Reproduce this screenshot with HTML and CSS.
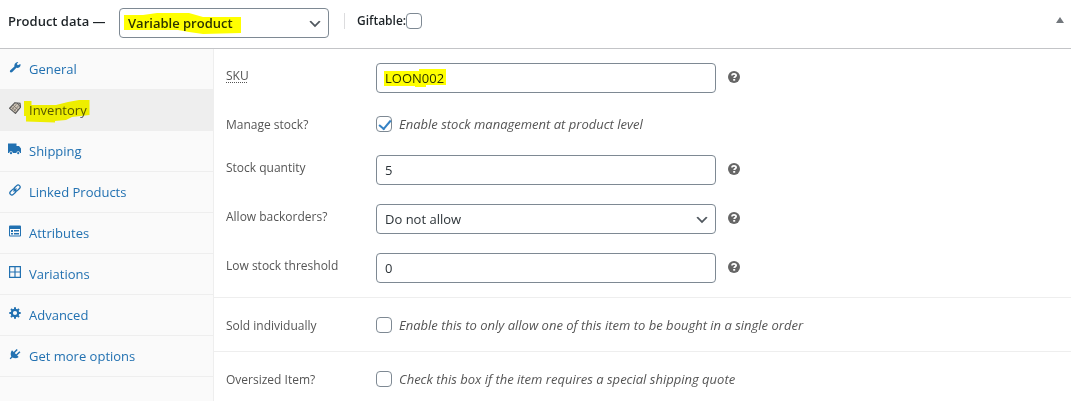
FILE: index.html
```html
<!DOCTYPE html>
<html lang="en">
<head>
<meta charset="utf-8">
<title>Product data</title>
<link rel="stylesheet" href="styles.css">
</head>
<body>
<svg class="sprite" aria-hidden="true">
  <symbol id="chevron" viewBox="0 0 20 20"><path d="M5 6l5 5 5-5 2 1-7 7-7-7z" fill="#50575e"/></symbol>
  <symbol id="help" viewBox="0 0 12 12"><circle cx="6" cy="6" r="6" fill="#666"/><path d="M4 4.600C4 3.300 4.800 2.800 6 2.800s2.100.6 2.100 1.600c0 1.300-1.900 1.300-1.900 2.700" fill="none" stroke="#fff" stroke-width="1.800"/><rect x="5.200" y="8" width="2" height="1.700" fill="#fff"/></symbol>
</svg>
<section class="postbox">
  <header class="postbox-header">
    <label class="title" for="product-type">Product data —</label>
    <span class="select-wrap type-select">
      <select id="product-type" class="control strong"><option>Variable product</option></select>
      <svg class="chevron"><use href="#chevron"/></svg>
      <svg class="mark mark-type" viewBox="0 0 120 22"><path d="M1 2L20 2 34 0 66 0 80 4 104 4 118 4 118 20 80 21 66 19 55 17 1 17z"/></svg>
    </span>
    <label class="giftable">Giftable:<input type="checkbox" class="check"></label>
    <button class="toggle" type="button" aria-label="Toggle panel"><svg viewBox="0 0 8 6"><path d="M4 0l4 6H0z" fill="#72777c"/></svg></button>
  </header>
  <div class="columns">
    <nav class="tabs">
      <a href="#general"><svg viewBox="0 0 12 12"><path d="M1.500 11.300c-.8-.5-.8-1.500-.2-2.100L5.400 5.600C5 3.500 6 1.400 8.500.9L9.300 1 7.800 2.900 8.900 4.200 11.300 3l.3.9c-.2 2.200-2.200 3.300-4.200 2.900L3.300 11c-.5.500-1.200.6-1.800.3z"/></svg>General</a>
      <a href="#inventory" class="active"><svg viewBox="0 0 12 12"><path d="M6 .7L11 1.300l.6 3.900L6.500 11.400.5 6.300z" fill="#cfc6b8" stroke="#555" stroke-width="1.100"/><path d="M2.300 5l5.200 4.700M4 3.200l5 4.500M2.500 8L7.500 2.200M4.500 9.700L9.500 3.800" stroke="#77706a" stroke-width=".8" fill="none"/><path d="M8 1l3.500 4" stroke="#555"/></svg><span class="marked">Inventory<svg class="mark mark-tab" viewBox="0 0 66 24"><path d="M0 2H7.500V6L32 6 44 3 55 1H65.500V16L48 18 42 21 31 22 31 23.500 2 22.500V17H0z"/></svg></span></a>
      <a href="#shipping"><svg class="truck" viewBox="0 0 13 12"><path d="M0 .5h8.500V3h2.500l2 2.500V10H0z"/><circle cx="3" cy="10" r="1.800" fill="#fafafa"/><circle cx="10.200" cy="10" r="1.800" fill="#fafafa"/><circle cx="3" cy="10.200" r="1.100"/><circle cx="10.200" cy="10.200" r="1.100"/></svg>Shipping</a>
      <a href="#linked"><svg viewBox="0 0 12 12"><g fill="none" stroke="#2271b1" stroke-width="1.300"><rect x="4.700" y="2" width="6.800" height="4" rx="2" transform="rotate(-45 8.100 4)"/><rect x=".5" y="6" width="6.800" height="4" rx="2" transform="rotate(-45 3.900 8)"/><path d="M4.500 7.500l3-3"/></g></svg>Linked Products</a>
      <a href="#attributes"><svg viewBox="0 0 12 12"><path fill-rule="evenodd" d="M1 .5h10q1 0 1 1v9q0 1-1 1H1q-1 0-1-1v-9q0-1 1-1zM1 4v6.500h10V4z"/><path d="M2 5h2v2H2zM2 8h2v1.500H2zM5 5h5v1.500H5zM5 8h5v1.500H5z"/></svg>Attributes</a>
      <a href="#variations"><svg viewBox="0 0 12 12"><path d="M.6.600h10.800v10.800H.6zM6 .6v10.800M.6 6h10.800" fill="none" stroke="#2271b1" stroke-width="1.200"/></svg>Variations</a>
      <a href="#advanced"><svg viewBox="0 0 12 12"><circle cx="6" cy="6" r="3.200" fill="none" stroke="#2271b1" stroke-width="2.200"/><path d="M6 .3v2M6 9.700v2M.3 6h2M9.700 6h2M2 2l1.400 1.400M8.600 8.600L10 10M2 10l1.400-1.400M8.600 3.400L10 2" stroke="#2271b1" stroke-width="2"/></svg>Advanced</a>
      <a href="#more"><svg viewBox="0 0 12 12"><path d="M3 2.300L9.700 9C8 10.500 5.500 10.700 3.500 9.500L1.500 11.300.7 10.500 2.300 8.500C1.300 6.500 1.500 4 3 2.300z"/><path d="M5 4.800L8.200 1.500M7.300 7.200L10.900 3.700" stroke="#2271b1" stroke-width="1.500"/></svg>Get more options</a>
    </nav>
    <form class="panel">
      <div class="group">
        <div class="row">
          <label for="sku"><abbr title="Stock Keeping Unit">SKU</abbr></label>
          <span class="field"><input id="sku" class="control" type="text" value="LOON002"><svg class="mark mark-sku" viewBox="0 0 63 18"><path d="M0 2H35V0H62V16H42V18H31V17H0z"/></svg></span>
          <svg class="help"><use href="#help"/></svg>
        </div>
        <div class="row row-check">
          <label for="manage">Manage stock?</label>
          <input id="manage" type="checkbox" class="check" checked>
          <span class="description">Enable stock management at product level</span>
        </div>
        <div class="row">
          <label for="qty">Stock quantity</label>
          <span class="field"><input id="qty" class="control" type="text" value="5"></span>
          <svg class="help"><use href="#help"/></svg>
        </div>
        <div class="row">
          <label for="backorders">Allow backorders?</label>
          <span class="field select-wrap"><select id="backorders" class="control"><option>Do not allow</option></select><svg class="chevron"><use href="#chevron"/></svg></span>
          <svg class="help"><use href="#help"/></svg>
        </div>
        <div class="row">
          <label for="threshold">Low stock threshold</label>
          <span class="field"><input id="threshold" class="control" type="text" value="0"></span>
          <svg class="help"><use href="#help"/></svg>
        </div>
      </div>
      <div class="group group-single">
        <div class="row row-check">
          <label for="sold">Sold individually</label>
          <input id="sold" type="checkbox" class="check">
          <span class="description">Enable this to only allow one of this item to be bought in a single order</span>
        </div>
      </div>
      <div class="group group-single">
        <div class="row row-check">
          <label for="oversized">Oversized Item?</label>
          <input id="oversized" type="checkbox" class="check">
          <span class="description">Check this box if the item requires a special shipping quote</span>
        </div>
      </div>
    </form>
  </div>
</section>
</body>
</html>
```
FILE: styles.css
```css
* { box-sizing: border-box; }

html, body { height: 100%; }

body {
  margin: 0;
  overflow: hidden;
  background: #fff;
  color: #3c434a;
  font: 13px/20px "Open Sans", "Noto Sans", sans-serif;
}

.sprite { display: none; }

.postbox {
  display: flex;
  flex-direction: column;
  min-height: 100%;
}

.postbox-header {
  display: flex;
  align-items: flex-start;
  padding: 8px 7px 10px 8px;
  border-bottom: 1px solid #c3c4c7;
  color: #1d2327;
}

.title {
  width: 111px;
  padding-top: 3px;
  font-weight: 600;
  white-space: nowrap;
}

.select-wrap { position: relative; }

.type-select { width: 210px; }

.control {
  display: block;
  width: 100%;
  height: 30px;
  margin: 0;
  padding: 0 8px;
  appearance: none;
  border: 1px solid #7e8993;
  border-radius: 4px;
  background: #fff;
  color: #2c3338;
  font: 13px/28px "Open Sans", "Noto Sans", sans-serif;
}

.strong { font-weight: 600; }

.chevron {
  position: absolute;
  top: 8px;
  right: 6px;
  width: 16px;
  height: 16px;
  pointer-events: none;
}

.mark {
  position: absolute;
  fill: #ff0;
  mix-blend-mode: multiply;
  pointer-events: none;
}

.mark-type { top: 5px; left: 4px; width: 120px; height: 22px; }
.mark-tab { top: -1px; left: -5px; width: 66px; height: 24px; }
.mark-sku { top: 6px; left: 8px; width: 63px; height: 18px; }

.giftable {
  display: flex;
  align-items: center;
  height: 16px;
  margin: 5px 0 0 15px;
  padding-left: 12px;
  border-left: 1px solid #dcdcde;
  font-size: 12px;
  font-weight: 600;
}

.check {
  display: grid;
  flex: none;
  width: 16px;
  height: 16px;
  margin: 0;
  appearance: none;
  border: 1px solid #7e8993;
  border-radius: 4px;
  background: #fff;
}

.check:checked::before {
  content: "";
  width: 10px;
  height: 5px;
  margin: 3px 0 0 2px;
  border: solid #3582c4;
  border-width: 0 0 2px 2px;
  transform: rotate(-50deg);
}

.toggle {
  display: flex;
  margin: 9px 0 0 auto;
  padding: 0;
  border: 0;
  background: none;
}

.toggle svg { width: 8px; height: 6px; }

.columns {
  display: flex;
  flex: 1;
}

.tabs {
  flex: none;
  width: 214px;
  border-right: 1px solid #eee;
  background: #fafafa;
}

.tabs a {
  display: flex;
  gap: 8px;
  height: 41px;
  padding: 10px 9px;
  border-bottom: 1px solid #eee;
  color: #2271b1;
  text-decoration: none;
}

.tabs a > svg {
  flex: none;
  width: 12px;
  height: 12px;
  margin-top: 2px;
  fill: #2271b1;
}

.tabs a > .truck {
  width: 13px;
  margin-left: -1px;
}

.tabs .active {
  background: #eee;
  color: #555;
}

.marked { position: relative; }

.panel { flex: 1; }

.group {
  padding: 5px 0 4px;
  border-bottom: 1px solid #eee;
}

.group-single { padding: 6px 0 4px; }
.group:last-child { border-bottom: 0; }

.row {
  display: flex;
  padding: 9px 12px 10px;
}

.row label {
  flex: none;
  width: 150px;
  padding-top: 3px;
  color: #555;
  font-size: 12px;
}

.row-check {
  align-items: center;
  height: 43px;
}

.row-check label { padding-top: 1px; }

abbr {
  text-decoration: underline dotted;
  text-underline-offset: 2px;
}

.field {
  position: relative;
  width: 340px;
}

.help {
  width: 12px;
  height: 12px;
  margin: 8px 0 0 12px;
}

.description {
  margin-left: 7px;
  color: #555;
  font-size: 13px;
  font-style: italic;
}
```
